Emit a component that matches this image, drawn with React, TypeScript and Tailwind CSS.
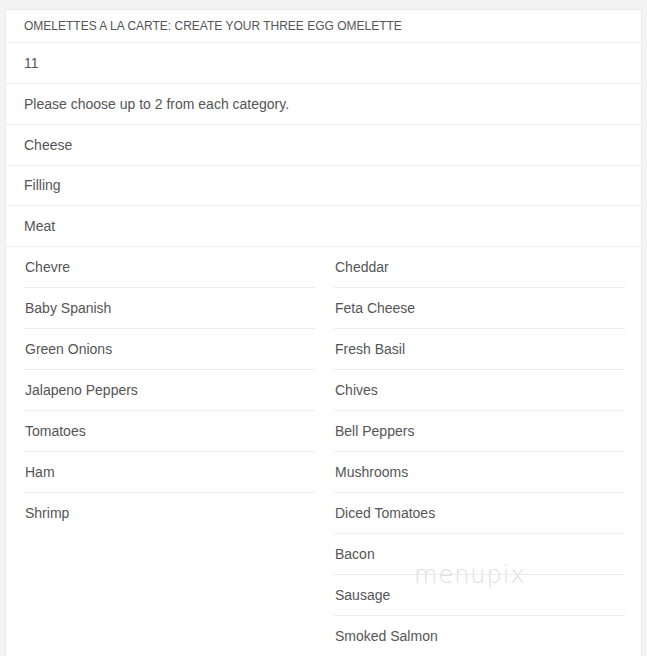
import React from "react";

const left = ["Chevre", "Baby Spanish", "Green Onions", "Jalapeno Peppers", "Tomatoes", "Ham", "Shrimp"];
const right = [
  "Cheddar",
  "Feta Cheese",
  "Fresh Basil",
  "Chives",
  "Bell Peppers",
  "Mushrooms",
  "Diced Tomatoes",
  "Bacon",
  "Sausage",
  "Smoked Salmon",
];

function Col({ items }: { items: string[] }) {
  return (
    <div className="flex flex-col">
      {items.map((it, i) => (
        <div
          key={it}
          className={`h-[41px] flex items-center pl-px ${i < items.length - 1 ? "border-b border-[#ececec]" : ""}`}
        >
          {it}
        </div>
      ))}
    </div>
  );
}

const rows: { t: string; h: string }[] = [
  { t: "11", h: "h-[41px]" },
  { t: "Please choose up to 2 from each category.", h: "h-[41px]" },
  { t: "Cheese", h: "h-[41px]" },
  { t: "Filling", h: "h-[40px]" },
  { t: "Meat", h: "h-[41px]" },
];

export default function App() {
  return (
    <div
      className="relative min-h-[656px] h-[656px] overflow-hidden bg-[#f4f4f4] pl-[5px] pr-[5px] pt-[9px] text-[#555555]"
      style={{ fontFamily: '"Liberation Sans", Arial, sans-serif' }}
    >
      <div className="bg-white border border-[#ebebeb]">
        <div className="h-[33px] flex items-center px-[18px] text-[12px] border-b border-[#efefef]">
          OMELETTES A LA CARTE: CREATE YOUR THREE EGG OMELETTE
        </div>
        {rows.map((r) => (
          <div key={r.t} className={`${r.h} flex items-center px-[18px] text-[14px] border-b border-[#efefef]`}>
            {r.t}
          </div>
        ))}
        <div className="grid grid-cols-[291px_291px] gap-x-[19px] pl-[18px] pr-[15px] text-[14px] pb-[20px]">
          <Col items={left} />
          <Col items={right} />
        </div>
      </div>
      <div
        className="absolute left-[414px] top-[557px] text-[24px] tracking-[1px] text-[#e0e0e0] select-none"
        style={{ fontFamily: '"DejaVu Sans", sans-serif', fontWeight: 200 }}
      >
        menupix
      </div>
    </div>
  );
}
